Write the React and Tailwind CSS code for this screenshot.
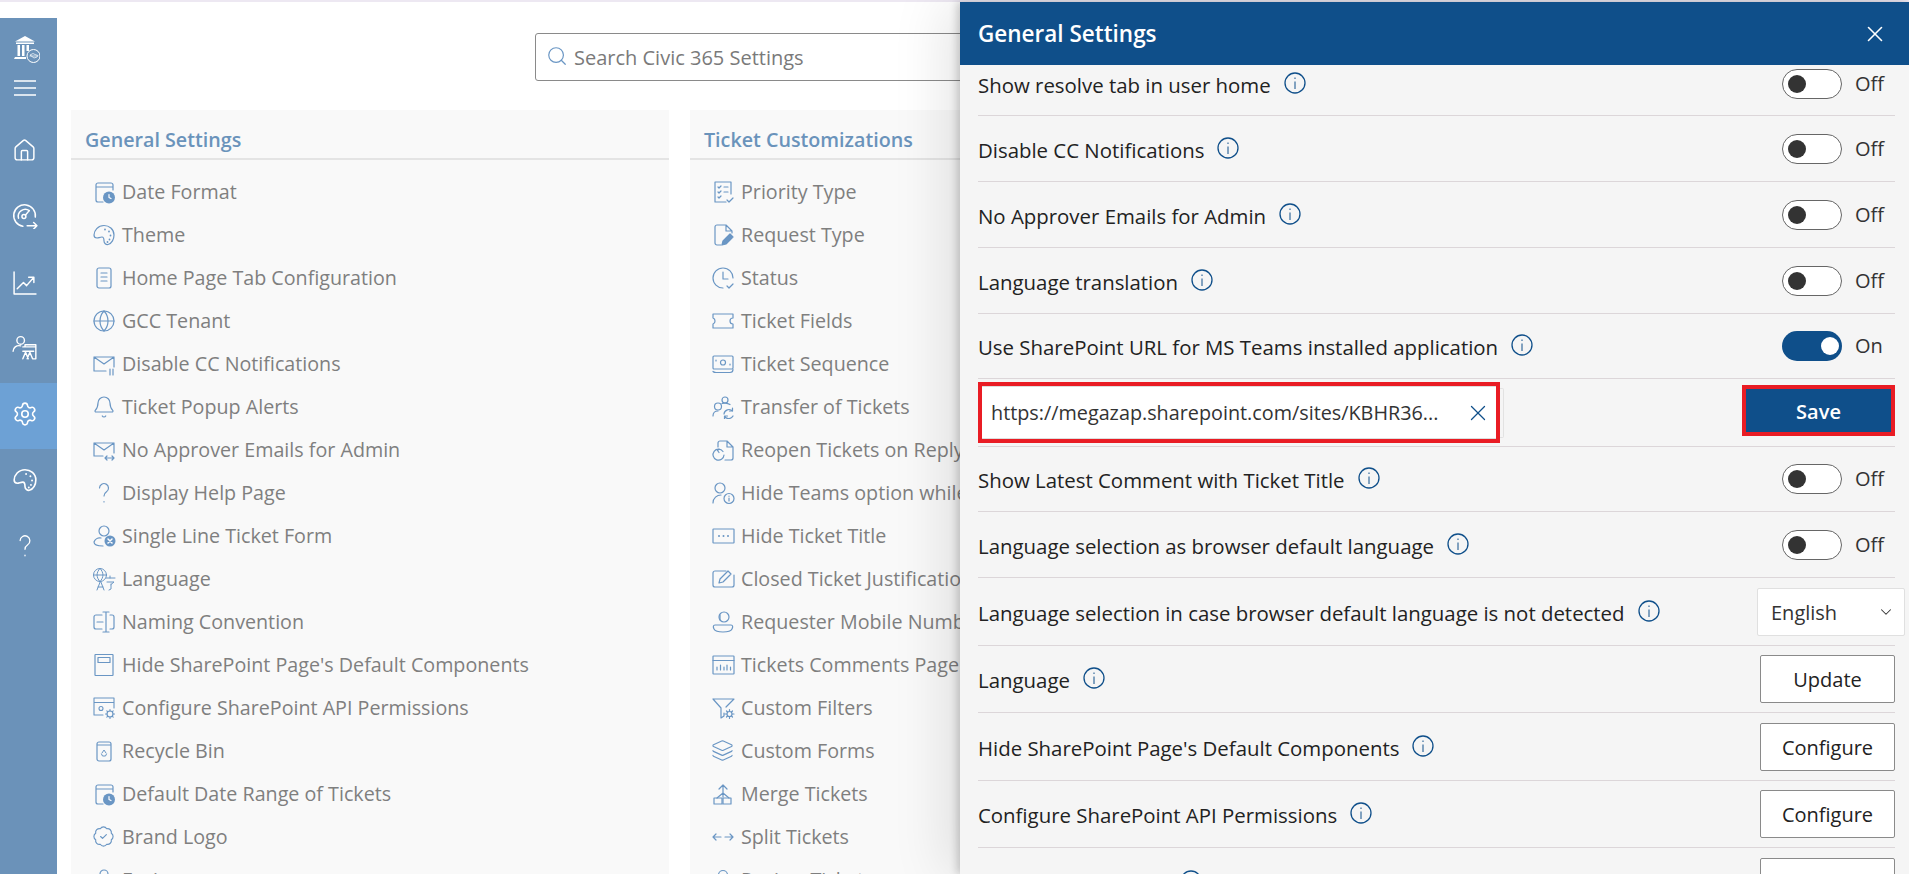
import React from 'react';
import { Bell, Globe, House, Layers, Search, Settings, X, ChevronDown, BadgeCheck } from 'lucide-react';

const Svg = ({ children, className = 'w-[24px] h-[24px]', sw = 1.2 }) => (
  <svg viewBox="0 0 24 24" fill="none" stroke="currentColor" strokeWidth={sw} strokeLinecap="round" strokeLinejoin="round" className={className}>
    {children}
  </svg>
);

/* ─── settings list icons ─── */
const DateIcon = () => (
  <Svg>
    <path d="M21 10V5a2 2 0 0 0-2-2H6a2 2 0 0 0-2 2v15a2 2 0 0 0 2 2h5M4 7h17" />
    <circle cx="17" cy="17.5" r="6" fill="currentColor" stroke="none" />
    <path d="M17 14.5v3l2 1" stroke="#fff" />
  </Svg>
);
const PaletteIcon = ({ className, sw }) => (
  <Svg className={className} sw={sw}>
    <path d="M12 2.500C6 2.500 2 7.500 2 12c0 2 1.500 3 3 3s3-1 5-1c2 0 2 2 2 4s2 4 4 3.500c4-1 6-5.500 6-9.500 0-6-5-9.500-10-9.500z" />
    <path d="M13 6.500v.01M17 8.500v.01M18.500 12.500v.01M17.500 16.500v.01M15.500 19v.01" strokeWidth="1.800" />
  </Svg>
);
const PageIcon = () => (
  <Svg>
    <rect x="5" y="2" width="14" height="20" rx="2" />
    <path d="M9 7h6M9 11h6M9 15h6" />
  </Svg>
);
const MailPauseIcon = () => (
  <Svg>
    <path d="M14 19H2V5h20v10M2 5l10 7 10-7M18 17v6M21 17v6" />
  </Svg>
);
const MailSwapIcon = () => (
  <Svg>
    <path d="M11 18H2V5h20v10M2 5l10 7 10-7M13 20h9M15 18l-2 2 2 2M20 18l2 2-2 2" />
  </Svg>
);
const QuestionIcon = ({ className }) => (
  <Svg className={className}>
    <path d="M7.500 7a4.500 4.500 0 1 1 7 3.800c-1.500 1-2.500 2-2.500 4.200M12 20.500v.5" />
  </Svg>
);
const UserXIcon = () => (
  <Svg>
    <circle cx="12" cy="7" r="5" />
    <path d="M9 14a6 6 0 0 0-7 4c0 3 3 4 9 4" />
    <circle cx="18" cy="17" r="5.500" fill="currentColor" stroke="none" />
    <path d="M16 15l4 4M20 15l-4 4" stroke="#fff" strokeWidth="1.500" />
  </Svg>
);
const LanguageIcon = () => (
  <Svg sw={1}>
    <circle cx="8" cy="8" r="6.500" />
    <path d="M1.500 8h13M8 1.500c-4 4-4 9 0 13M8 1.500c4 4 4 9 0 13M5 23l3.500-9 3.500 9M6 20h5M14 11h9M18 9v2M15 15h7l-3 2.500M19 17v5l-2 1" />
  </Svg>
);
const NamingIcon = () => (
  <Svg>
    <path d="M10 5H4a2 2 0 0 0-2 2v10a2 2 0 0 0 2 2h6M18 5h2a2 2 0 0 1 2 2v10a2 2 0 0 1-2 2h-2M14 2v20M11 2h6M11 22h6M5 12h6" />
  </Svg>
);
const PanelIcon = () => (
  <Svg>
    <rect x="3" y="1.500" width="18" height="21" rx="0.500" />
    <rect x="6" y="4.500" width="12" height="5" />
  </Svg>
);
const ApiIcon = () => (
  <Svg sw={1.1}>
    <path d="M11 19H2V2h20v10M2 6.500h20" />
    <circle cx="9" cy="12.500" r="2" />
    <circle cx="18" cy="18" r="3" />
    <path d="M18 13.500v1.500M18 21v1.500M13.500 18H15M21 18h1.500M14.800 14.800l1 1M20.200 20.200l1 1M14.800 21.200l1-1M20.200 15.800l1-1" />
  </Svg>
);
const BinIcon = () => (
  <Svg>
    <path d="M5 5a2 2 0 0 1 2-2h10a2 2 0 0 1 2 2v15a2 2 0 0 1-2 2H7a2 2 0 0 1-2-2zM5 6h14" />
    <path d="M10 14l2-3 2 3M9.500 15l1 2h3l1-2" strokeWidth="1" />
  </Svg>
);
const BagIcon = () => (
  <Svg>
    <path d="M3 9h18v13H3zM8 9V6a4 4 0 0 1 8 0v3" />
    <path d="M3 9h18v3H3z" fill="currentColor" />
  </Svg>
);
const PriorityIcon = () => (
  <Svg>
    <path d="M20 14V2H4v20h11M7 7l1 1 2-2M7 12l1 1 2-2M7 17l1 1 2-2M13 7h4M13 12h4M16 20l2 2 4-4" />
  </Svg>
);
const RequestIcon = () => (
  <Svg>
    <path d="M10 22H6a2 2 0 0 1-2-2V4a2 2 0 0 1 2-2h9l6 6v2M15 2v6h6" />
    <path d="M11 22l1-4 7-7 3 3-7 7z" fill="currentColor" />
  </Svg>
);
const StatusIcon = () => (
  <Svg>
    <path d="M22 12a10 10 0 1 0-10 10M12 6v7h5M16 20l2 2 4-4" />
  </Svg>
);
const TicketIcon = () => (
  <Svg>
    <path d="M2 5h20v4a3 3 0 0 0 0 6v4H2v-4a3 3 0 0 0 2-3 3 3 0 0 0-2-3z" />
  </Svg>
);
const SequenceIcon = () => (
  <Svg>
    <rect x="2" y="4" width="20" height="13" rx="1" />
    <circle cx="12" cy="10.500" r="2.500" />
    <path d="M5 8v1M19 12v1M2 19.500c1 1 2 1 3 1h14c2 0 3-1 3-3" />
  </Svg>
);
const TransferIcon = () => (
  <Svg>
    <circle cx="14" cy="5" r="3" />
    <circle cx="7" cy="11.500" r="3.500" />
    <path d="M2 21c0-3 2-5 5-5M11 8.500c1-.5 5-1 8 1M13 19a5 5 0 0 1 8.500-3M22 21a5 5 0 0 1-8 1M21.500 13v3h-3M13.500 24v-3h3" />
  </Svg>
);
const ReopenIcon = () => (
  <Svg>
    <path d="M7 9V5a2 2 0 0 1 2-2h7l6 6v11a2 2 0 0 1-2 2h-6M16 3v6h6" />
    <path d="M12 13.500A5.500 5.500 0 1 0 13 17M8 11l-1.500 1.500L8 14.500" />
  </Svg>
);
const UserInfoIcon = () => (
  <Svg>
    <circle cx="9" cy="7" r="5" />
    <path d="M2 22c0-5 4-8 8-8" />
    <circle cx="18" cy="17.500" r="5" />
    <path d="M18 17v3M18 15v.2" />
  </Svg>
);
const DotsIcon = () => (
  <Svg>
    <rect x="2" y="5" width="21" height="14" rx="0.500" />
    <path d="M8 12h.01M12.500 12h.01M17 12h.01" strokeWidth="2" />
  </Svg>
);
const NoteEditIcon = () => (
  <Svg>
    <path d="M15 4H4a2 2 0 0 0-2 2v12a2 2 0 0 0 2 2h17a2 2 0 0 0 2-2V8" />
    <path d="M8 16l1-4 8-8 3 3-8 8z" />
  </Svg>
);
const RequesterIcon = () => (
  <Svg>
    <circle cx="13" cy="7" r="5" />
    <path d="M9 5v5M4 15h16c2 0 2 2 1 4-1 2-4 3-9 3s-8-1-9-3c-1-2-1-4 1-4z" />
  </Svg>
);
const BarsIcon = () => (
  <Svg>
    <rect x="2" y="3" width="21" height="18" rx="0.500" />
    <path d="M2 7.500h21M6 17v-3M9.500 17v-5M13 17v-3M16 17v-5M19.500 17v-3" />
  </Svg>
);
const FilterGearIcon = () => (
  <Svg>
    <path d="M2 3h21l-8 8M2 3l8 9v10l3-2v-3" />
    <circle cx="18.500" cy="18" r="2.500" />
    <path d="M18.500 13.500V15M18.500 21v1.500M14 18h1.500M21.500 18H23M15.500 15l1 1M20.500 20l1 1M15.500 21l1-1M20.500 16l1-1" />
  </Svg>
);
const MergeIcon = () => (
  <Svg>
    <path d="M12 15V3M8 7l4-4 4 4M12 11l-6 5M12 11l6 5" />
    <rect x="3" y="16" width="8" height="6" />
    <rect x="12" y="16" width="8" height="6" />
  </Svg>
);
const SplitIcon = () => (
  <Svg>
    <path d="M2 12h8M5 9l-3 3 3 3M14 12h8M19 9l3 3-3 3" />
  </Svg>
);
const UserIcon = () => (
  <Svg>
    <circle cx="12" cy="7" r="4.500" />
    <path d="M4 22c0-5 3-8 8-8s8 3 8 8" />
  </Svg>
);

/* ─── sidebar icons ─── */
const BankLogo = () => (
  <svg viewBox="0 0 26 28" className="w-[26px] h-[28px]" fill="#fff">
    <path d="M11 0l10 5.500H1z" />
    <path d="M2 6.500h18v1.500H2zM3.500 9h2.500v11H3.500zM8 9h2.500v11H8zM12.500 9H15v6h-2.500zM1 21h11v2H0z" />
    <circle cx="19.500" cy="20" r="6.500" fill="#6b92b9" stroke="#fff" strokeWidth="1" />
    <path d="M15.500 20h8M16 19l3-1.500 2 1 3 1-1 1.500-3 1z" stroke="#fff" strokeWidth="0.700" fill="none" />
  </svg>
);
const GaugeIcon = () => (
  <Svg className="w-[26px] h-[26px]" sw={1.400}>
    <path d="M10 21.500A10 10 0 1 1 21.500 13" />
    <path d="M6 14a6.500 6.500 0 0 1 10-7" />
    <circle cx="11" cy="12.500" r="1.800" />
    <path d="M12.500 11l3-3.500M14 21h9M20 18l3 3-3 3" />
  </Svg>
);
const ChartIcon = () => (
  <Svg className="w-[25px] h-[25px]" sw={1.400}>
    <path d="M2 2v21h21M5 18l6-6 3 3 7-8M16 7h5v5" />
  </Svg>
);
const PeopleIcon = () => (
  <Svg className="w-[26px] h-[26px]" sw={1.300}>
    <circle cx="8" cy="5" r="3.500" />
    <path d="M1 15c0-3 3-6 7-5M10 11h12v11h-3M12 11V9h10v2M10 15h10M10 22l2.500-6 2.500 6M14 22l2.500-6 2.500 6" />
  </Svg>
);

const generalItems = [
  [DateIcon, 'Date Format'],
  [PaletteIcon, 'Theme'],
  [PageIcon, 'Home Page Tab Configuration'],
  [() => <Globe className="w-[24px] h-[24px]" strokeWidth={1.2} />, 'GCC Tenant'],
  [MailPauseIcon, 'Disable CC Notifications'],
  [() => <Bell className="w-[24px] h-[24px]" strokeWidth={1.2} />, 'Ticket Popup Alerts'],
  [MailSwapIcon, 'No Approver Emails for Admin'],
  [QuestionIcon, 'Display Help Page'],
  [UserXIcon, 'Single Line Ticket Form'],
  [LanguageIcon, 'Language'],
  [NamingIcon, 'Naming Convention'],
  [PanelIcon, "Hide SharePoint Page's Default Components"],
  [ApiIcon, 'Configure SharePoint API Permissions'],
  [BinIcon, 'Recycle Bin'],
  [DateIcon, 'Default Date Range of Tickets'],
  [() => <BadgeCheck className="w-[23px] h-[23px]" strokeWidth={1.2} />, 'Brand Logo'],
  [BagIcon, 'Favicon'],
];

const ticketItems = [
  [PriorityIcon, 'Priority Type'],
  [RequestIcon, 'Request Type'],
  [StatusIcon, 'Status'],
  [TicketIcon, 'Ticket Fields'],
  [SequenceIcon, 'Ticket Sequence'],
  [TransferIcon, 'Transfer of Tickets'],
  [ReopenIcon, 'Reopen Tickets on Reply'],
  [UserInfoIcon, 'Hide Teams option while creating Ticket'],
  [DotsIcon, 'Hide Ticket Title'],
  [NoteEditIcon, 'Closed Ticket Justification'],
  [RequesterIcon, 'Requester Mobile Number'],
  [BarsIcon, 'Tickets Comments Page Size'],
  [FilterGearIcon, 'Custom Filters'],
  [() => <Layers className="w-[23px] h-[23px]" strokeWidth={1.2} />, 'Custom Forms'],
  [MergeIcon, 'Merge Tickets'],
  [SplitIcon, 'Split Tickets'],
  [UserIcon, 'Review Tickets'],
];

const sideNav = [
  { icon: <House className="w-[25px] h-[25px]" strokeWidth={1.4} /> },
  { icon: <GaugeIcon /> },
  { icon: <ChartIcon /> },
  { icon: <PeopleIcon /> },
  { icon: <Settings className="w-[26px] h-[26px]" strokeWidth={1.5} />, active: true },
  { icon: <PaletteIcon className="w-[26px] h-[26px]" sw={1.5} /> },
  { icon: <QuestionIcon className="w-[26px] h-[26px]" /> },
];

const InfoIcon = () => (
  <svg viewBox="0 0 22 22" fill="none" stroke="#0f4f8a" strokeWidth="1.3" className="w-[22px] h-[22px] shrink-0 -mt-[1px]">
    <circle cx="11" cy="11" r="10" />
    <path d="M11 9.500v7.500M11 5.500v1.500" strokeWidth="1" />
  </svg>
);

const Toggle = ({ on }) => (
  <div className="flex items-center gap-[13px]">
    {on ? (
      <div className="w-[60px] h-[30px] rounded-full bg-[#0f4f8a] flex items-center justify-end pr-[3px]">
        <div className="w-[18px] h-[18px] rounded-full bg-white" />
      </div>
    ) : (
      <div className="w-[60px] h-[30px] rounded-full bg-white border border-[#666] flex items-center pl-[5px]">
        <div className="w-[18px] h-[18px] rounded-full bg-[#333]" />
      </div>
    )}
    <span className="w-[40px] text-[20px] text-[#333]">{on ? 'On' : 'Off'}</span>
  </div>
);

const ActionButton = ({ label }) => (
  <button className="w-[135px] h-[48px] pt-[2px] bg-white border border-[#8a8a8a] rounded-[2px] text-[20px] font-medium text-[#222]">
    {label}
  </button>
);

const settingRows = [
  { label: 'Show resolve tab in user home', cls: 'h-[51px] pb-[13px]', control: <Toggle /> },
  { label: 'Disable CC Notifications', cls: 'h-[66px]', control: <Toggle /> },
  { label: 'No Approver Emails for Admin', cls: 'h-[66px]', control: <Toggle /> },
  { label: 'Language translation', cls: 'h-[66px]', control: <Toggle /> },
  { label: 'Use SharePoint URL for MS Teams installed application', cls: 'h-[65px]', control: <Toggle on /> },
  { url: true, cls: 'h-[68px]' },
  { label: 'Show Latest Comment with Ticket Title', cls: 'h-[65px]', control: <Toggle /> },
  { label: 'Language selection as browser default language', cls: 'h-[66px]', control: <Toggle /> },
  {
    label: 'Language selection in case browser default language is not detected',
    cls: 'h-[68px]',
    control: (
      <div className="w-[148px] h-[48px] -mr-[10px] bg-white border border-[#e0e0e0] rounded-[2px] flex items-center justify-between pl-[13px] pr-[9px] text-[20px] text-[#333]">
        <span className="pt-[2px]">English</span>
        <ChevronDown className="w-[18px] h-[18px]" strokeWidth={1.4} />
      </div>
    ),
  },
  { label: 'Language', cls: 'h-[67px]', control: <ActionButton label="Update" /> },
  { label: "Hide SharePoint Page's Default Components", cls: 'h-[68px]', control: <ActionButton label="Configure" /> },
  { label: 'Configure SharePoint API Permissions', cls: 'h-[67px]', control: <ActionButton label="Configure" /> },
  { label: 'Naming Convention', cls: 'h-[68px]', control: <ActionButton label="Configure" /> },
];

const SettingsCard = ({ title, items }) => (
  <section className="w-[598px] shrink-0 bg-[#f9f9f9]">
    <h2 className="h-[50px] pl-[14px] pt-[12px] flex items-center border-b-2 border-[#e4e4e4] text-[19.7px] font-semibold text-[#6a93bb]">{title}</h2>
    <ul className="pt-[10px] pl-[21px]">
      {items.map(([ItemIcon, label]) => (
        <li key={label} className="h-[43px] flex items-center text-[19.7px] text-[#7f7f7f] whitespace-nowrap">
          <span className="w-[30px] flex justify-start text-[#6a96c4]"><ItemIcon /></span>
          {label}
        </li>
      ))}
    </ul>
  </section>
);

const SettingsPanel = () => (
  <aside className="absolute top-[2px] right-0 bottom-0 w-[949px] flex flex-col bg-[#f5f5f5] shadow-[-3px_0_8px_rgba(0,0,0,0.18),-16px_0_50px_rgba(0,0,0,0.1)] overflow-hidden">
    <header className="h-[63px] shrink-0 bg-[#0f4f8a] flex items-center justify-between pl-[18px] pr-[20px] text-white">
      <span className="text-[22.5px] font-semibold">General Settings</span>
      <X className="w-[26px] h-[26px] mr-[1px]" strokeWidth={1.5} />
    </header>
    <div className="pl-[18px] pr-[14px]">
      {settingRows.map((row, i) =>
        row.url ? (
          <div key={i} className={`${row.cls} shrink-0 flex items-center justify-between border-b border-[#dcd6d9]`}>
            <div className="flex items-center">
              <div className="w-[522px] h-[61px] border-[4px] border-[#e91c24] bg-white">
                <div className="h-full border-y border-[#ddd] flex items-center justify-between pl-[9px] pr-[5px] text-[19.8px] text-[#333]">
                  <span className="pt-[1px]">https://megazap.sharepoint.com/sites/KBHR36...</span>
                  <X className="w-[26px] h-[26px] text-[#0f4f8a]" strokeWidth={1.2} />
                </div>
              </div>
              <div className="w-[4px] h-[50px] border-y border-r border-[#e2e2e2] rounded-r-[2px]" />
            </div>
            <button className="w-[153px] h-[51px] mb-[4px] pt-[3px] border-[4px] border-[#e91c24] bg-[#0f4f8a] text-white text-[20px] font-semibold">Save</button>
          </div>
        ) : (
          <div key={i} className={`${row.cls} shrink-0 flex items-center justify-between border-b border-[#dcd6d9]`}>
            <div className="flex items-center gap-[13px] text-[20.4px] font-medium text-[#222] whitespace-nowrap">
              <span className="pt-[3px]">{row.label}</span>
              <InfoIcon />
            </div>
            {row.control}
          </div>
        )
      )}
    </div>
  </aside>
);

export default function App() {
  return (
    <div className="relative h-[874px] overflow-hidden bg-white font-['Open_Sans',sans-serif]">
      <div className="h-[2px] bg-[#ede8f2]" />
      <div className="flex">
        <nav className="w-[57px] shrink-0 h-[856px] mt-[16px] bg-[#6b92b9] flex flex-col text-white">
          <div className="h-[101px] shrink-0 flex flex-col items-center pt-[18px]">
            <div className="pr-[4px]"><BankLogo /></div>
            <svg viewBox="0 0 22 16" className="w-[22px] h-[16px] mt-[16px] -ml-[8px]" stroke="#fff" strokeWidth="1.400">
              <path d="M0 1h22M0 8h22M0 15h22" />
            </svg>
          </div>
          {sideNav.map((item, i) => (
            <div key={i} className={`h-[66px] shrink-0 flex items-center justify-center pr-[8px] pb-[4px] ${item.active ? 'bg-[#6da1d5]' : ''}`}>
              {item.icon}
            </div>
          ))}
        </nav>
        <main className="flex-1 min-w-0 pl-[14px]">
          <div className="h-[108px] pt-[31px]">
            <div className="ml-[464px] w-[896px] h-[48px] border border-[#8a8a8a] rounded-[3px] flex items-center pl-[10px] text-[20px] text-[#7a7a7a]">
              <Search className="w-[22px] h-[22px] mr-[6px] -mt-[2px] text-[#6a96c4]" strokeWidth={1.3} />
              <span className="pt-[2px]">Search Civic 365 Settings</span>
            </div>
          </div>
          <div className="flex gap-[21px]">
            <SettingsCard title="General Settings" items={generalItems} />
            <SettingsCard title="Ticket Customizations" items={ticketItems} />
          </div>
        </main>
      </div>
      <SettingsPanel />
    </div>
  );
}
